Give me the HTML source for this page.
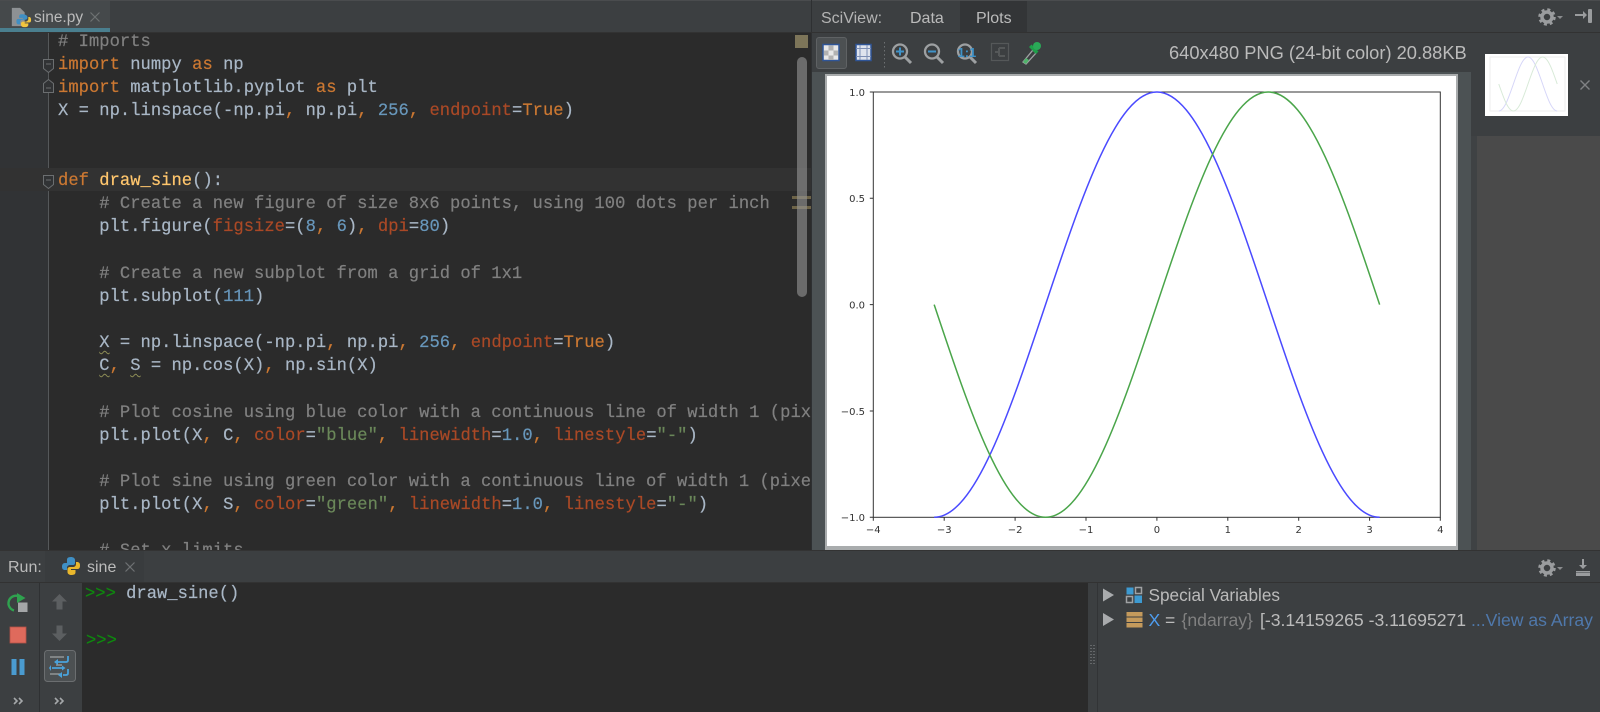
<!DOCTYPE html>
<html><head><meta charset="utf-8">
<style>
html,body{margin:0;padding:0;background:#3c3f41}
body{width:1600px;height:712px;overflow:hidden;position:relative;font-family:"Liberation Sans",sans-serif}
.a{position:absolute}
.t{position:absolute;white-space:pre;line-height:20px}
#code{position:absolute;left:0;top:33px;width:811px;height:517px;background:#2b2b2b;overflow:hidden}
#code pre{position:absolute;left:58px;top:-2px;margin:0;font:17.15px/23.15px "Liberation Mono",monospace;letter-spacing:.03px;color:#a9b7c6;-webkit-text-stroke:.2px}
.k{color:#cc7832}.c{color:#808080}.n{color:#6897bb}.s{color:#6a8759}.p{color:#aa4926}.f{color:#ffc66d}
.w{text-decoration:underline wavy #8d8d55 1px;text-underline-offset:3px}
</style></head><body>

<!-- editor tab bar -->
<div class="a" style="left:0;top:0;width:811px;height:33px;background:#3c3f41;border-top:1px solid #4a4c4e;box-sizing:border-box"></div>
<div class="a" style="left:0;top:1px;width:110px;height:27px;background:#45494b"></div>
<div class="a" style="left:0;top:28px;width:110px;height:4px;background:#4a7f8f"></div>
<div class="a" style="left:0;top:32px;width:811px;height:1px;background:#323232"></div>
<svg class="a" style="left:10px;top:5px" width="22" height="24" viewBox="0 0 24 24">
<path d="M2 2h9l5 5v15H2z" fill="#8d9194"/>
<path d="M13 9c-3 0-3 1.500-3 3v1h4v1H9c-2 0-2 2-2 3 0 2 1 3 2 3h2v-2c0-2 1-3 3-3h3c1 0 2-1 2-2v-1c0-2-3-3-6-3z" fill="#3f8fc4"/>
<path d="M16 23c3 0 4-1 4-3v-1h-4v-1h5c2 0 2-2 2-3 0-2-1-3-2-3h-1v2c0 2-2 3-3 3h-3c-1 0-2 1-2 2v1c0 2 1 3 4 3z" fill="#f2c53d"/>
</svg>
<div class="t" style="left:34px;top:8px;font-size:15.5px;color:#bbbbbb">sine.py</div>
<svg class="a" style="left:90px;top:12px" width="10" height="10"><path d="M.5 .5l9 9M9.500 .5l-9 9" stroke="#6e7173" stroke-width="1.200"/></svg>

<!-- editor -->
<div id="code">
<div class="a" style="left:0;top:0;width:48px;height:517px;background:#313335"></div>
<div class="a" style="left:48px;top:0;width:1px;height:517px;background:#55585a"></div>
<div class="a" style="left:0;top:135px;width:811px;height:23px;background:#323232"></div>
<pre><span class="c"># Imports</span>
<span class="k">import</span> numpy <span class="k">as</span> np
<span class="k">import</span> matplotlib.pyplot <span class="k">as</span> plt
X = np.linspace(-np.pi<span class="k">,</span> np.pi<span class="k">,</span> <span class="n">256</span><span class="k">,</span> <span class="p">endpoint</span>=<span class="k">True</span>)


<span class="k">def</span> <span class="f">draw_sine</span>():
    <span class="c"># Create a new figure of size 8x6 points, using 100 dots per inch</span>
    plt.figure(<span class="p">figsize</span>=(<span class="n">8</span><span class="k">,</span> <span class="n">6</span>)<span class="k">,</span> <span class="p">dpi</span>=<span class="n">80</span>)

    <span class="c"># Create a new subplot from a grid of 1x1</span>
    plt.subplot(<span class="n">111</span>)

    <span class="w">X</span> = np.linspace(-np.pi<span class="k">,</span> np.pi<span class="k">,</span> <span class="n">256</span><span class="k">,</span> <span class="p">endpoint</span>=<span class="k">True</span>)
    <span class="w">C</span><span class="k">,</span> <span class="w">S</span> = np.cos(X)<span class="k">,</span> np.sin(X)

    <span class="c"># Plot cosine using blue color with a continuous line of width 1 (pixels)</span>
    plt.plot(X<span class="k">,</span> C<span class="k">,</span> <span class="p">color</span>=<span class="s">"blue"</span><span class="k">,</span> <span class="p">linewidth</span>=<span class="n">1.0</span><span class="k">,</span> <span class="p">linestyle</span>=<span class="s">"-"</span>)

    <span class="c"># Plot sine using green color with a continuous line of width 1 (pixels)</span>
    plt.plot(X<span class="k">,</span> S<span class="k">,</span> <span class="p">color</span>=<span class="s">"green"</span><span class="k">,</span> <span class="p">linewidth</span>=<span class="n">1.0</span><span class="k">,</span> <span class="p">linestyle</span>=<span class="s">"-"</span>)

    <span class="c"># Set x limits</span></pre>
<svg class="a" style="left:42px;top:0" width="14" height="170" fill="#313335" stroke="#6b6e70" stroke-width="1">
<path d="M1.500 26.500h10v9l-5 4-5-4z"/><path d="M4 31h5" />
<path d="M6.500 46.500l5 4v9h-10v-9z"/><path d="M4 55h5"/>
<path d="M1.500 142.500h10v9l-5 4-5-4z"/><path d="M4 147h5"/>
</svg>
<div class="a" style="left:795px;top:2px;width:13px;height:13px;background:#7d7559"></div>
<div class="a" style="left:792px;top:163px;width:19px;height:3px;background:#6e6448"></div>
<div class="a" style="left:792px;top:173px;width:19px;height:3px;background:#6e6448"></div>
<div class="a" style="left:797px;top:24px;width:10px;height:240px;border-radius:5px;background:rgba(150,150,150,.6)"></div>
</div>

<!-- SciView header -->
<div class="a" style="left:811px;top:0;width:789px;height:33px;background:#3c3f41;border-top:1px solid #4a4c4e;box-sizing:border-box"></div>
<div class="a" style="left:811px;top:0;width:1px;height:550px;background:#2e3032"></div>
<div class="a" style="left:960px;top:1px;width:67px;height:31px;background:#333537"></div>
<div class="a" style="left:811px;top:32px;width:789px;height:1px;background:#323232"></div>
<div class="t" style="left:821px;top:9px;font-size:16px;color:#b4b4b4">SciView:</div>
<div class="t" style="left:910px;top:9px;font-size:16px;color:#bbbbbb">Data</div>
<div class="t" style="left:976px;top:9px;font-size:16px;color:#bbbbbb">Plots</div>
<svg class="a" style="left:1538px;top:7px" width="28" height="20" viewBox="0 0 28 20">
<circle cx="9" cy="10" r="5" fill="none" stroke="#9a9c9e" stroke-width="3.500"/>
<circle cx="9" cy="10" r="7.500" fill="none" stroke="#9a9c9e" stroke-width="2.500" stroke-dasharray="3 2.900"/>
<path d="M19 9h6l-3 3z" fill="#8a8c8e"/></svg>
<svg class="a" style="left:1574px;top:8px" width="20" height="18" viewBox="0 0 20 18" fill="#9a9c9e">
<path d="M1 6h8V3l4 4-4 4V8H1z"/><rect x="14" y="1" width="4" height="14" rx="1"/></svg>

<!-- plot toolbar -->
<div class="a" style="left:816px;top:37px;width:31px;height:32px;background:#4c5052;border:1px solid #5f6264;border-radius:3px;box-sizing:border-box"></div>
<svg class="a" style="left:810px;top:30px" width="250" height="45" viewBox="810 30 250 45">
<g>
<rect x="823" y="44.500" width="16" height="16" fill="#e8e8e8" stroke="#2f5597" stroke-width="1.500"/>
<path d="M828.500 45.500h5v5h-5zM824 50.500h4.500v5H824zM833.500 50.500h4.500v5h-4.500zM828.500 55.500h5v4.500h-5z" fill="#b2b2b2"/>
<rect x="856" y="44.500" width="15" height="16" fill="#dfe4ee" stroke="#2f5597" stroke-width="1.500"/>
<path d="M860 45v15M867 45v15M856 48.500h15M856 56.500h15" stroke="#7d8fb5" stroke-width="1"/>
</g>
<path d="M884.500 42v28" stroke="#6d7072" stroke-width="1" stroke-dasharray="1.500 2.500"/>
<g fill="none" stroke="#9da0a2" stroke-width="2.300">
<circle cx="900" cy="51.500" r="7"/><path d="M905 57l6 6" stroke-width="3"/>
<circle cx="932" cy="51.500" r="7"/><path d="M937 57l6 6" stroke-width="3"/>
<circle cx="965" cy="51.500" r="7"/><path d="M970 57l6 6" stroke-width="3"/>
</g>
<path d="M896 51.500h8M900 47.500v8M928 51.500h8" stroke="#3f93c9" stroke-width="2" fill="none"/>
<text x="957.500" y="57" font-family="Liberation Sans" font-size="13" font-weight="bold" fill="#3f93c9">1:1</text>
<g fill="none" stroke="#555859" stroke-width="1.200">
<rect x="991.500" y="43.500" width="17" height="17"/>
<path d="M995 52h4M999 48h6M999 56h6M999 48v8" stroke-width="2"/>
</g>
<path d="M1023 62l10-12 3 3-10 11z" fill="none" stroke="#a0a2a4" stroke-width="1.300"/>
<path d="M1023 62l3-4 3 2-3 4z" fill="#4fb36a"/>
<path d="M1029 47l7 7 2.500-2.500-7-7z" fill="#1f9f4a"/>
<circle cx="1037" cy="46" r="4" fill="#2aa957"/>
</svg>

<!-- image area -->
<div class="a" style="left:812px;top:72px;width:659px;height:478px;background:#4c5254"></div>
<div class="a" style="left:825px;top:74px;width:633px;height:476px;background:#a9acad"></div>
<div class="a" style="left:827px;top:76px;width:629px;height:470px;background:#fff"></div>
<div class="t" style="left:1169px;top:43px;font-size:18.300px;color:#bbbbbb">640x480 PNG (24-bit color) 20.88KB</div>

<svg class="a" style="left:0;top:0" width="1600" height="712">
<rect x="873.3" y="92" width="567" height="425.300" fill="none" stroke="#333" stroke-width="1"/>
<g stroke="#333" stroke-width="1">
<path d="M873.300 92h-3.500M873.300 198.300h-3.500M873.300 304.650h-3.500M873.300 411h-3.500M873.300 517.300h-3.500"/>
<path d="M873.300 517.300v3.500M944.200 517.300v3.500M1015.100 517.300v3.500M1086 517.300v3.500M1156.900 517.300v3.500M1227.800 517.300v3.500M1298.700 517.300v3.500M1369.600 517.300v3.500M1440.300 517.300v3.500"/>
</g>
<g font-family="DejaVu Sans" font-size="10" fill="#333" text-anchor="end">
<text x="865" y="96">1.0</text><text x="865" y="202">0.5</text><text x="865" y="308.500">0.0</text><text x="865" y="415">−0.5</text><text x="865" y="521">−1.0</text>
</g>
<g font-family="DejaVu Sans" font-size="10" fill="#333" text-anchor="middle">
<text x="873.300" y="533">−4</text><text x="944.200" y="533">−3</text><text x="1015.100" y="533">−2</text><text x="1086" y="533">−1</text><text x="1156.900" y="533">0</text><text x="1227.800" y="533">1</text><text x="1298.700" y="533">2</text><text x="1369.600" y="533">3</text><text x="1440.300" y="533">4</text>
</g>
<g transform="translate(1156.900 304.650) scale(70.900 -212.650)" fill="none">
<path vector-effect="non-scaling-stroke" stroke="#4a4aff" stroke-width="1.500" d="M-3.1416 -1C-2.5731 -1 -2.0831 -.5123 -1.5708 0C-1.0585 .5123 -.5685 1 0 1C.5685 1 1.0585 .5123 1.5708 0C2.0831 -.5123 2.5731 -1 3.1416 -1"/>
<path vector-effect="non-scaling-stroke" stroke="#4aa54a" stroke-width="1.500" d="M-3.1416 0C-2.6293 -.5123 -2.1393 -1 -1.5708 -1C-1.0023 -1 -.5123 -.5123 0 0C.5123 .5123 1.0023 1 1.5708 1C2.1393 1 2.6293 .5123 3.1416 0"/>
</g>
</svg>

<!-- gallery -->
<div class="a" style="left:1471px;top:33px;width:129px;height:517px;background:#3c3f41"></div>
<div class="a" style="left:1477px;top:136px;width:123px;height:414px;background:#4a4a4a"></div>
<div class="a" style="left:1471px;top:136px;width:6px;height:414px;background:#3f4244"></div>
<svg class="a" style="left:1485px;top:54px" width="83" height="62" viewBox="0 0 83 62">
<rect width="83" height="62" fill="#fff"/>
<rect x="5" y="3" width="75" height="54" fill="none" stroke="#eeeeee"/>
<g transform="translate(43 30) scale(9.300 -27)" fill="none">
<path vector-effect="non-scaling-stroke" stroke="#d6d6f8" stroke-width="1" d="M-3.1416 -1C-2.5731 -1 -2.0831 -.5123 -1.5708 0C-1.0585 .5123 -.5685 1 0 1C.5685 1 1.0585 .5123 1.5708 0C2.0831 -.5123 2.5731 -1 3.1416 -1"/>
<path vector-effect="non-scaling-stroke" stroke="#d8ead8" stroke-width="1" d="M-3.1416 0C-2.6293 -.5123 -2.1393 -1 -1.5708 -1C-1.0023 -1 -.5123 -.5123 0 0C.5123 .5123 1.0023 1 1.5708 1C2.1393 1 2.6293 .5123 3.1416 0"/>
</g></svg>
<svg class="a" style="left:1580px;top:80px" width="10" height="10"><path d="M.5 .5l9 9M9.500 .5l-9 9" stroke="#808284" stroke-width="1.400"/></svg>

<!-- Run bar -->
<div class="a" style="left:0;top:550px;width:1600px;height:32px;background:#3c3f41;border-top:1px solid #333;box-sizing:border-box"></div>
<div class="a" style="left:0;top:582px;width:1600px;height:1px;background:#323232"></div>
<div class="a" style="left:45px;top:551px;width:99px;height:31px;background:#393c3e"></div>
<div class="t" style="left:8px;top:558px;font-size:16px;color:#bbbbbb">Run:</div>
<svg class="a" style="left:61px;top:556px" width="20" height="20" viewBox="0 0 20 20">
<path d="M10 1C6 1 6 3 6 4v2h4.500v1H4C2 7 1 8.500 1 10.500 1 13 2 14 4 14h2v-2c0-2 1.500-3 3-3h3c1.500 0 2-1 2-2V4c0-2-2-3-4-3z" fill="#3f8fc4"/>
<path d="M10.500 19c4 0 4-2 4-3v-2H10v-1h6.500c2 0 2.500-1.500 2.500-3.500C19 7 18 6 16 6h-1v2c0 2-1.500 3-3 3H9c-1.500 0-2.500 1-2.500 2v3c0 2 2 3 4 3z" fill="#e9b72c"/>
<path d="M6 6h4.500v1H6z" fill="#3f8fc4"/></svg>
<div class="t" style="left:87px;top:558px;font-size:16px;color:#bbbbbb">sine</div>
<svg class="a" style="left:125px;top:562px" width="10" height="10"><path d="M.5 .5l9 9M9.500 .5l-9 9" stroke="#6e7173" stroke-width="1.200"/></svg>
<svg class="a" style="left:1538px;top:558px" width="28" height="20" viewBox="0 0 28 20">
<circle cx="9" cy="10" r="5" fill="none" stroke="#9a9c9e" stroke-width="3.500"/>
<circle cx="9" cy="10" r="7.500" fill="none" stroke="#9a9c9e" stroke-width="2.500" stroke-dasharray="3 2.900"/>
<path d="M19 9h6l-3 3z" fill="#8a8c8e"/></svg>
<svg class="a" style="left:1574px;top:558px" width="18" height="20" viewBox="0 0 18 20" fill="#9a9c9e">
<path d="M8 1h2v6h3l-4 4-4-4h3z"/><rect x="2" y="13" width="14" height="1.500"/><rect x="2" y="15" width="14" height="3"/></svg>

<!-- run side toolbars -->
<div class="a" style="left:0;top:583px;width:82px;height:129px;background:#3c3f41"></div>
<div class="a" style="left:39px;top:583px;width:1px;height:129px;background:#2f3133"></div>
<svg class="a" style="left:0;top:583px" width="82" height="129" viewBox="0 583 82 129">
<path d="M18 596A7.500 7.500 0 0 0 14 610.500" fill="none" stroke="#2fa24f" stroke-width="2.400"/>
<path d="M17 593l8.500 5-8.500 5z" fill="#2fa24f"/>
<rect x="18" y="602.500" width="9.500" height="9.500" fill="#a4a6a8"/>
<rect x="10" y="627" width="16" height="16" fill="#df6a5c" stroke="#b55047" stroke-width=".8"/>
<rect x="11.500" y="659" width="5" height="16" fill="#4a9bd0"/>
<rect x="19.500" y="659" width="5" height="16" fill="#4a9bd0"/>
<g fill="none" stroke="#a5a8aa" stroke-width="1.600">
<path d="M14 698l3 3-3 3M19 698l3 3-3 3M55 698l3 3-3 3M60 698l3 3-3 3"/>
</g>
<path d="M59.500 594l7.500 7.500h-4.500v8h-6v-8H52zM59.500 641l7.500-7.500h-4.500v-8h-6v8H52z" fill="#5c5f61"/>
<rect x="44.500" y="650.500" width="31" height="31" rx="3" fill="#4c5052" stroke="#6b6e70"/>
<path d="M50 657h14M56 665h6M50 674h10" stroke="#a0a2a4" stroke-width="1.300"/>
<path d="M68 656v4q0 2-2 2H57M52 668h11M68 669v4q0 2-2 2h-3" fill="none" stroke="#49a3dc" stroke-width="1.800"/>
<path d="M58 659v6l-4-3zM51 665v6l-2-3zM62 672v6l-4-3zM62 665.500l3.500 2.500-3.500 2.500z" fill="#49a3dc"/>
</svg>

<!-- console -->
<div class="a" style="left:82px;top:583px;width:1006px;height:129px;background:#2b2b2b"></div>
<div class="t" style="left:85px;top:585px;font:17.150px/20px 'Liberation Mono',monospace;color:#a9b7c6;-webkit-text-stroke:.2px"><span style="color:#0e8a0e">&gt;&gt;&gt;</span> draw_sine()</div>
<div class="t" style="left:86px;top:632px;font:17.150px/20px 'Liberation Mono',monospace;color:#0e8a0e;-webkit-text-stroke:.2px">&gt;&gt;&gt;</div>

<!-- variables -->
<div class="a" style="left:1088px;top:583px;width:10px;height:129px;background:#3c3f41"></div>
<div class="a" style="left:1097px;top:583px;width:1px;height:129px;background:#323436"></div>
<div class="a" style="left:1098px;top:583px;width:502px;height:129px;background:#3c3f41"></div>
<svg class="a" style="left:1088px;top:644px" width="10" height="22"><path d="M3 1v19M6 1v19" stroke="#8d8f91" stroke-width="1" stroke-dasharray="1 2"/></svg>
<svg class="a" style="left:1100px;top:586px" width="45" height="46" viewBox="0 0 45 46">
<path d="M3 2.500l11 6.500-11 6.500zM3 27l11 6.500-11 6.500z" fill="#a9abad"/>
<rect x="26.500" y="1.500" width="7" height="7" fill="#3d9ad1"/><rect x="35.500" y="1.500" width="6" height="6" fill="none" stroke="#a0a2a4" stroke-width="1.500"/>
<rect x="26.500" y="10.500" width="6" height="6" fill="none" stroke="#a0a2a4" stroke-width="1.500"/><rect x="34.500" y="9.500" width="7.500" height="7.500" fill="#3d9ad1"/>
<rect x="26.500" y="26" width="16" height="4.500" fill="#c49a5c"/><rect x="26.500" y="31.500" width="16" height="4.500" fill="#c49a5c"/><rect x="26.500" y="37" width="16" height="4.500" fill="#c49a5c"/>
</svg>
<div class="t" style="left:1148.500px;top:585px;font-size:17.200px;color:#bbbbbb">Special Variables</div>
<div class="t" style="left:1148.500px;top:609.500px;font-size:17.600px;color:#4e9df0">X</div>
<div class="t" style="left:1165px;top:609.500px;font-size:17.600px;color:#bbbbbb">=</div>
<div class="t" style="left:1181.500px;top:609.500px;font-size:17.600px;color:#808080">{ndarray}</div>
<div class="t" style="left:1260px;top:609.500px;font-size:17.600px;color:#bbbbbb">[-3.14159265 -3.11695271</div>
<div class="t" style="left:1471px;top:609.500px;font-size:17.600px;color:#4f78ab">...View as Array</div>

</body></html>
